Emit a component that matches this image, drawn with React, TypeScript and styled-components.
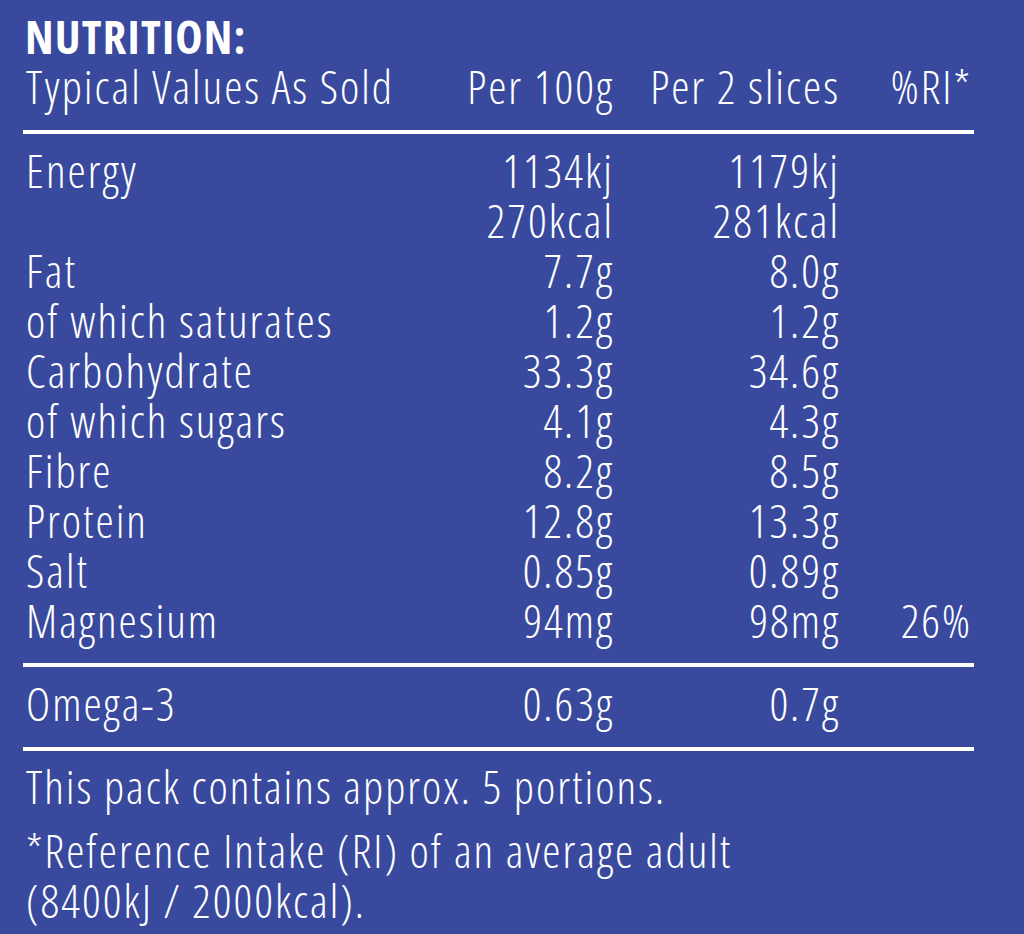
import { Fragment } from 'react';
import styled, { createGlobalStyle } from 'styled-components';

const BLUE = '#38499e';
const WHITE = '#ffffff';
const FONT = '"Open Sans", "Liberation Sans", sans-serif';

const GlobalStyle = createGlobalStyle`
  html, body {
    margin: 0;
    padding: 0;
    background: ${BLUE};
  }
  body {
    font-family: ${FONT};
    font-stretch: condensed;
    font-weight: 300;
    color: ${WHITE};
  }
`;

const Panel = styled.div`
  box-sizing: border-box;
  width: 1024px;
  min-height: 934px;
  padding: 13px 50px 0 23px;
  background: ${BLUE};
`;

const Title = styled.h1`
  margin: 0 0 2px 2px;
  font-size: 46px;
  line-height: 46px;
  font-weight: 700;
  letter-spacing: 1.2px;
`;

const Grid = styled.div`
  display: grid;
  grid-template-columns: 1fr 176px 226px 132px;
  font-size: 46px;
  line-height: 50px;
  letter-spacing: 2px;
`;

const Cell = styled.div<{ $align?: 'left' | 'right' }>`
  text-align: ${(p) => p.$align ?? 'left'};
  padding: ${(p) => (p.$align === 'right' ? '0 2px 0 0' : '0 0 0 3px')};
  white-space: nowrap;
`;

const Rule = styled.hr<{ $above: number; $below: number }>`
  margin: ${(p) => p.$above}px 0 ${(p) => p.$below}px;
  border: 0;
  height: 4px;
  background: ${WHITE};
`;

const Note = styled.p<{ $gap: number }>`
  margin: ${(p) => p.$gap}px 0 0 3px;
  font-size: 46px;
  line-height: 50px;
  letter-spacing: 2px;
`;

type Row = { label: string; per100: string[]; perSlices: string[]; ri?: string };

const ROWS: Row[] = [
  { label: 'Energy', per100: ['1134kj', '270kcal'], perSlices: ['1179kj', '281kcal'] },
  { label: 'Fat', per100: ['7.7g'], perSlices: ['8.0g'] },
  { label: 'of which saturates', per100: ['1.2g'], perSlices: ['1.2g'] },
  { label: 'Carbohydrate', per100: ['33.3g'], perSlices: ['34.6g'] },
  { label: 'of which sugars', per100: ['4.1g'], perSlices: ['4.3g'] },
  { label: 'Fibre', per100: ['8.2g'], perSlices: ['8.5g'] },
  { label: 'Protein', per100: ['12.8g'], perSlices: ['13.3g'] },
  { label: 'Salt', per100: ['0.85g'], perSlices: ['0.89g'] },
  { label: 'Magnesium', per100: ['94mg'], perSlices: ['98mg'], ri: '26%' },
];

const EXTRA: Row[] = [{ label: 'Omega-3', per100: ['0.63g'], perSlices: ['0.7g'] }];

function Lines({ values }: Readonly<{ values: string[] }>) {
  return (
    <>
      {values.map((v) => (
        <div key={v}>{v}</div>
      ))}
    </>
  );
}

function Rows({ rows }: Readonly<{ rows: Row[] }>) {
  return (
    <Grid>
      {rows.map((row) => (
        <Fragment key={row.label}>
          <Cell>{row.label}</Cell>
          <Cell $align="right">
            <Lines values={row.per100} />
          </Cell>
          <Cell $align="right">
            <Lines values={row.perSlices} />
          </Cell>
          <Cell $align="right">{row.ri ?? ''}</Cell>
        </Fragment>
      ))}
    </Grid>
  );
}

export default function App() {
  return (
    <>
      <GlobalStyle />
      <Panel>
        <Title>NUTRITION:</Title>
        <Grid>
          <Cell>Typical Values As Sold</Cell>
          <Cell $align="right">Per 100g</Cell>
          <Cell $align="right">Per 2 slices</Cell>
          <Cell $align="right">%RI*</Cell>
        </Grid>
        <Rule $above={19} $below={11} />
        <Rows rows={ROWS} />
        <Rule $above={18} $below={11} />
        <Rows rows={EXTRA} />
        <Rule $above={19} $below={0} />
        <Note $gap={10}>This pack contains approx. 5 portions.</Note>
        <Note $gap={14}>
          *Reference Intake (RI) of an average adult
          <br />
          (8400kJ / 2000kcal).
        </Note>
      </Panel>
    </>
  );
}
